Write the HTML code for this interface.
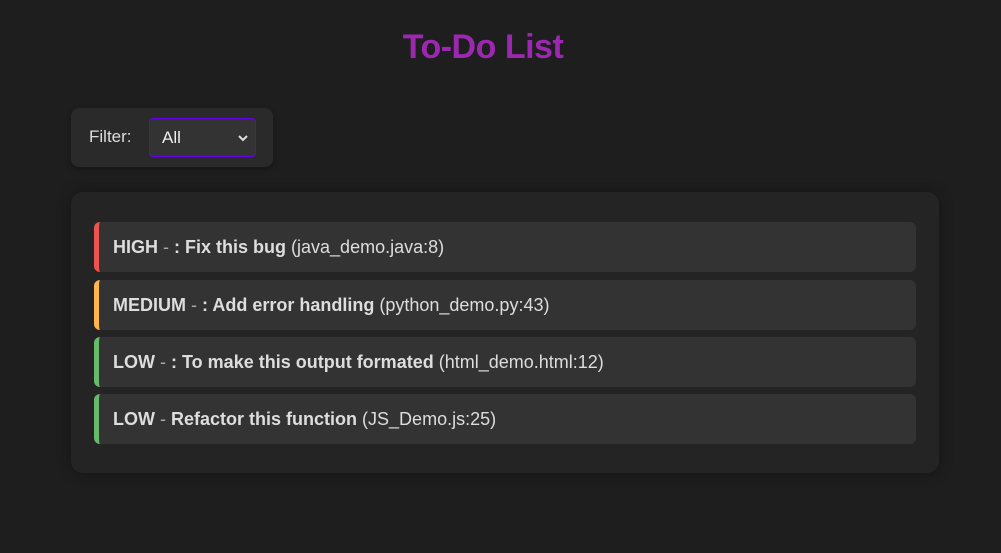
<!DOCTYPE html>
<html><head><meta charset="utf-8"><style>
*{box-sizing:border-box;margin:0;padding:0}
html,body{width:1001px;height:553px;background:#1e1e1e;overflow:hidden;font-family:"Liberation Sans",sans-serif;color:#ddd}
h1{position:absolute;top:28px;left:0;width:966px;text-align:center;font-size:34px;font-weight:bold;color:#9c27b0;letter-spacing:-0.5px}
.filter{position:absolute;left:71px;top:108px;width:202px;height:59px;background:#2a2a2a;border-radius:8px;box-shadow:0 2px 6px rgba(0,0,0,.3)}
.filter span{position:absolute;left:18px;top:19px;font-size:17px;color:#ddd}
.sel{position:absolute;left:78px;top:10px;width:107px;height:39px;border:1px solid #6200ea;border-radius:4px;background:#333}
.sel b{position:absolute;left:12px;top:9px;font-weight:normal;font-size:17px;color:#eee}
.sel svg{position:absolute;right:6px;top:14px}
.list{position:absolute;left:71px;top:192px;width:868px;height:281px;background:#242424;border-radius:12px;box-shadow:0 0 14px rgba(0,0,0,.35)}
.item{position:absolute;left:23px;width:822px;height:50px;background:#333;border-radius:6px;border-left:5px solid;padding-left:14px;line-height:50px;font-size:18px;color:#ddd;white-space:nowrap}
.item i{font-style:normal;color:#aaa}
</style></head><body>
<h1>To-Do List</h1>
<div class="filter"><span>Filter:</span><div class="sel"><b>All</b><svg width="12" height="10" viewBox="0 0 12 10"><path d="M2 3l4 4 4-4" stroke="#ddd" stroke-width="2" fill="none"/></svg></div></div>
<div class="list">
<div class="item" style="top:30px;border-color:#ef5350"><b>HIGH</b> <i>-</i> <b>: Fix this bug</b> (java_demo.java:8)</div>
<div class="item" style="top:88px;border-color:#ffb74d"><b>MEDIUM</b> <i>-</i> <b>: Add error handling</b> (python_demo.py:43)</div>
<div class="item" style="top:145px;border-color:#66bb6a"><b>LOW</b> <i>-</i> <b>: To make this output formated</b> (html_demo.html:12)</div>
<div class="item" style="top:202px;border-color:#66bb6a"><b>LOW</b> <i>-</i> <b>Refactor this function</b> (JS_Demo.js:25)</div>
</div>
</body></html>
